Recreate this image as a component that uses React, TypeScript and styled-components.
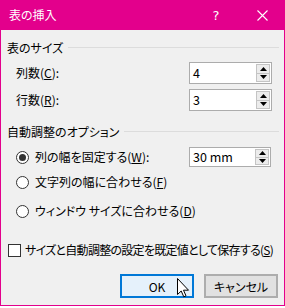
import React from "react";
import styled, { createGlobalStyle } from "styled-components";

const GlobalStyle = createGlobalStyle`
  html, body { margin: 0; padding: 0; background: #ffffff; }
  body {
    font-family: "Noto Sans CJK JP", "Noto Sans", sans-serif;
    font-feature-settings: "palt";
    -webkit-font-smoothing: antialiased;
  }
  * { box-sizing: border-box; }
`;

const Window = styled.div`
  position: relative;
  width: 285px;
  height: 306px;
  border: 1px solid #e3008c;
  border-top: none;
  background: #f0f0f0;
  display: flex;
  flex-direction: column;
`;

const TitleBar = styled.div`
  height: 30px;
  margin: 0 -1px;
  background: #e3008c;
  color: #ffffff;
  display: flex;
  align-items: center;
  padding-left: 9px;
`;

const Title = styled.div`
  flex: 1;
  font-size: 12px;
  line-height: 16px;
`;

const CaptionButton = styled.div`
  width: 46px;
  height: 30px;
  display: flex;
  align-items: center;
  justify-content: center;
  color: #ffffff;
  font-size: 13px;
  font-family: "DejaVu Sans", sans-serif;
`;

const Content = styled.div`
  display: flex;
  flex-direction: column;
  padding: 9px 5px 0 6px;
  font-size: 12px;
  color: #000000;
`;

const SectionHeader = styled.div<{ $mt?: number }>`
  display: flex;
  align-items: center;
  height: 16px;
  margin-top: ${(p) => p.$mt ?? 0}px;
`;

const SectionLine = styled.div`
  flex: 1;
  height: 1px;
  background: #dcdcdc;
  margin-left: 5px;
`;

const FieldRow = styled.div<{ $mt: number; $h: number; $indent: number }>`
  display: flex;
  align-items: center;
  height: ${(p) => p.$h}px;
  margin-top: ${(p) => p.$mt}px;
  padding-left: ${(p) => p.$indent}px;
`;

const Label = styled.div<{ $tight?: boolean }>`
  flex: 1;
  line-height: 16px;
  white-space: nowrap;
  letter-spacing: ${(p) => (p.$tight ? "-0.72px" : "0")};
`;

const NumberBox = styled.div<{ $w: number; $h: number; $mr: number }>`
  width: ${(p) => p.$w}px;
  height: ${(p) => p.$h}px;
  margin-right: ${(p) => p.$mr}px;
  border: 1px solid #acacac;
  background: #ffffff;
  display: flex;
  align-items: center;
`;

const NumberValue = styled.div`
  flex: 1;
  padding-left: 3px;
  font-size: 12.5px;
  line-height: 16px;
`;

const Spinner = styled.div`
  width: 15px;
  align-self: stretch;
  display: flex;
  flex-direction: column;
  padding: 1px 1px 1px 0;
`;

const SpinButton = styled.div`
  flex: 1;
  border: 1px solid #c4c4c4;
  background: #ececec;
  display: flex;
  align-items: center;
  justify-content: center;
  & + & { margin-top: -1px; }
`;

const RadioCircle = styled.div<{ $checked: boolean }>`
  width: 13px;
  height: 13px;
  border-radius: 50%;
  border: 1px solid #333333;
  background: #ffffff;
  margin-right: 6px;
  display: flex;
  align-items: center;
  justify-content: center;
  flex-shrink: 0;
  &::after {
    content: "";
    display: ${(p) => (p.$checked ? "block" : "none")};
    width: 7px;
    height: 7px;
    border-radius: 50%;
    background: #333333;
  }
`;

const CheckBox = styled.div`
  width: 13px;
  height: 13px;
  border: 1px solid #333333;
  background: #ffffff;
  margin-right: 4px;
  flex-shrink: 0;
`;

const ButtonRow = styled.div`
  display: flex;
  justify-content: flex-end;
  gap: 10px;
  margin-top: 14px;
  padding-right: 1px;
`;

const DialogButton = styled.div<{ $primary?: boolean }>`
  position: relative;
  width: 74px;
  height: 24px;
  display: flex;
  align-items: center;
  justify-content: center;
  font-size: 12px;
  background: ${(p) => (p.$primary ? "#e5f1fb" : "#e1e1e1")};
  border: ${(p) => (p.$primary ? "2px solid #0078d7" : "2px solid #adadad")};
`;

const Cursor = styled.svg`
  position: absolute;
  left: 55px;
  top: 2px;
`;

const Spin = () => (
  <Spinner>
    <SpinButton>
      <svg width="7" height="4" viewBox="0 0 7 4">
        <path d="M0 4 L3.5 0 L7 4 Z" fill="#000" />
      </svg>
    </SpinButton>
    <SpinButton>
      <svg width="7" height="4" viewBox="0 0 7 4">
        <path d="M0 0 L3.5 4 L7 0 Z" fill="#000" />
      </svg>
    </SpinButton>
  </Spinner>
);

export default function App() {
  return (
    <>
      <GlobalStyle />
      <Window>
        <TitleBar>
          <Title>表の挿入</Title>
          <CaptionButton>?</CaptionButton>
          <CaptionButton>
            <svg width="11" height="11" viewBox="0 0 11 11">
              <path d="M0.5 0.5 L10.5 10.5 M10.5 0.5 L0.5 10.5" stroke="#fff" strokeWidth="1.1" />
            </svg>
          </CaptionButton>
        </TitleBar>
        <Content>
          <SectionHeader>
            <span>表のサイズ</span>
            <SectionLine />
          </SectionHeader>
          <FieldRow $mt={7} $h={22} $indent={9}>
            <Label>
              列数(<u>C</u>):
            </Label>
            <NumberBox $w={83} $h={22} $mr={7}>
              <NumberValue>4</NumberValue>
              <Spin />
            </NumberBox>
          </FieldRow>
          <FieldRow $mt={5} $h={22} $indent={9}>
            <Label>
              行数(<u>R</u>):
            </Label>
            <NumberBox $w={83} $h={22} $mr={7}>
              <NumberValue>3</NumberValue>
              <Spin />
            </NumberBox>
          </FieldRow>
          <SectionHeader $mt={12}>
            <span>自動調整のオプション</span>
            <SectionLine />
          </SectionHeader>
          <FieldRow $mt={8} $h={20} $indent={9}>
            <RadioCircle $checked />
            <Label>
              列の幅を固定する(<u>W</u>):
            </Label>
            <NumberBox $w={82} $h={20} $mr={8}>
              <NumberValue>30 mm</NumberValue>
              <Spin />
            </NumberBox>
          </FieldRow>
          <FieldRow $mt={5} $h={20} $indent={9}>
            <RadioCircle $checked={false} />
            <Label>
              文字列の幅に合わせる(<u>F</u>)
            </Label>
          </FieldRow>
          <FieldRow $mt={9} $h={20} $indent={9}>
            <RadioCircle $checked={false} />
            <Label>
              ウィンドウ サイズに合わせる(<u>D</u>)
            </Label>
          </FieldRow>
          <FieldRow $mt={19} $h={20} $indent={1}>
            <CheckBox />
            <Label $tight>
              サイズと自動調整の設定を既定値として保存する(<u>S</u>)
            </Label>
          </FieldRow>
          <ButtonRow>
            <DialogButton $primary>
              OK
              <Cursor width="13" height="20" viewBox="0 0 13 20">
                <path
                  d="M0.5 0.5 L0.5 16.5 L4.2 13 L6.8 18.8 L9 17.8 L6.5 12.2 L11.5 12.2 Z"
                  fill="#fff"
                  stroke="#000"
                  strokeWidth="1"
                  strokeLinejoin="miter"
                />
              </Cursor>
            </DialogButton>
            <DialogButton>キャンセル</DialogButton>
          </ButtonRow>
        </Content>
      </Window>
    </>
  );
}
